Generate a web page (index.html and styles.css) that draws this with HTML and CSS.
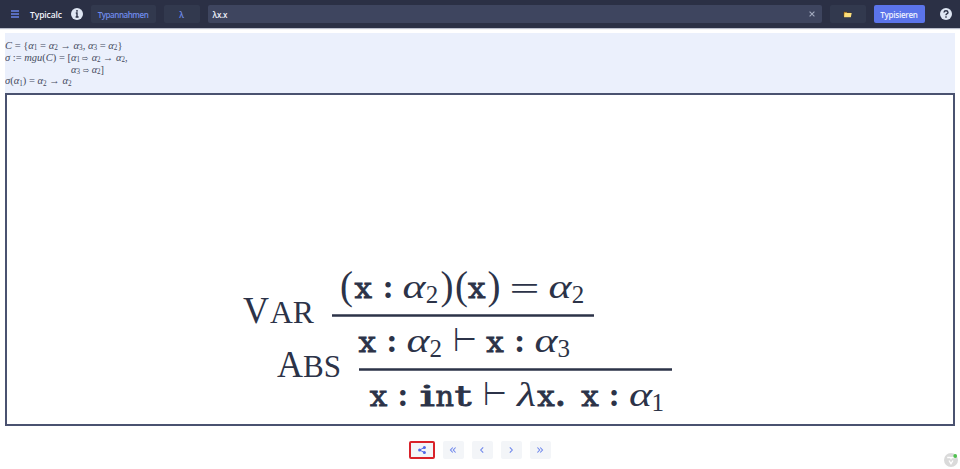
FILE: index.html
```html
<!DOCTYPE html>
<html lang="de">
<head>
<meta charset="utf-8">
<title>Typicalc</title>
<link rel="stylesheet" href="styles.css">
</head>
<body>
<header class="bar">
  <svg class="menu" viewBox="0 0 8 8"><path d="M0 1h8M0 4h8M0 7h8"/></svg>
  <h1>Typicalc</h1>
  <svg class="round info" viewBox="0 0 12 12"><circle cx="6" cy="6" r="6"/><path d="M6 2v1.7M4.8 5H6v4M4.6 9h3"/></svg>
  <button class="btn types">Typannahmen</button>
  <button class="btn lambda">λ</button>
  <div class="field"><span>λx.x</span><svg viewBox="0 0 6 6"><path d="M.6.6l4.8 4.8M5.4.6L.6 5.4"/></svg></div>
  <button class="btn folder"><svg viewBox="0 0 9 7"><path class="back" d="M.5 6V.8h3l.7.7h3.6V6z"/><path class="front" d="M1 6.2L1.8 2h6.9L7.9 6.2z"/></svg></button>
  <button class="btn primary">Typisieren</button>
  <svg class="round help" viewBox="0 0 12 12"><circle cx="6" cy="6" r="6"/><path d="M4 4.5Q4.1 2.8 6 2.8T8 4.5Q8 5.4 6.8 5.9Q6 6.3 6 7.2M6 8.3v1.4"/></svg>
</header>
<main>
  <section class="constraints">
    <svg class="math" viewBox="5 33 950 60">
      <text x="5" y="48.6" textLength="117.5" lengthAdjust="spacingAndGlyphs"><tspan class="it">C</tspan> = {<tspan class="it">α</tspan><tspan class="sub" dy="1.5">1</tspan><tspan dy="-1.5"> = </tspan><tspan class="it">α</tspan><tspan class="sub" dy="1.5">2</tspan><tspan dy="-1.5"> → </tspan><tspan class="it">α</tspan><tspan class="sub" dy="1.5">3</tspan><tspan dy="-1.5">, </tspan><tspan class="it">α</tspan><tspan class="sub" dy="1.5">3</tspan><tspan dy="-1.5"> = </tspan><tspan class="it">α</tspan><tspan class="sub" dy="1.5">2</tspan><tspan dy="-1.5">}</tspan></text>
      <text x="5" y="60.6" textLength="66" lengthAdjust="spacingAndGlyphs"><tspan class="it">σ</tspan> := <tspan class="it">mgu</tspan>(<tspan class="it">C</tspan>) = [</text>
      <text x="71" y="60.6" textLength="56.5" lengthAdjust="spacingAndGlyphs"><tspan class="it">α</tspan><tspan class="sub" dy="1.5">1</tspan><tspan dy="-1.5"> </tspan><tspan class="small">⇨</tspan> <tspan class="it">α</tspan><tspan class="sub" dy="1.5">2</tspan><tspan dy="-1.5"> → </tspan><tspan class="it">α</tspan><tspan class="sub" dy="1.5">2</tspan><tspan dy="-1.5">,</tspan></text>
      <text x="71" y="72.6" textLength="33" lengthAdjust="spacingAndGlyphs"><tspan class="it">α</tspan><tspan class="sub" dy="1.5">3</tspan><tspan dy="-1.5"> </tspan><tspan class="small">⇨</tspan> <tspan class="it">α</tspan><tspan class="sub" dy="1.5">2</tspan><tspan dy="-1.5">]</tspan></text>
      <text x="5" y="84.4" textLength="66.5" lengthAdjust="spacingAndGlyphs"><tspan class="it">σ</tspan>(<tspan class="it">α</tspan><tspan class="sub" dy="1.5">1</tspan><tspan dy="-1.5">) = </tspan><tspan class="it">α</tspan><tspan class="sub" dy="1.5">2</tspan><tspan dy="-1.5"> → </tspan><tspan class="it">α</tspan><tspan class="sub" dy="1.5">2</tspan></text>
    </svg>
  </section>
  <section class="proof">
    <svg class="tree" viewBox="7 95 946 329">
      <g class="rule-name">
        <text x="243" y="322.5" textLength="26" lengthAdjust="spacingAndGlyphs">V</text><text class="sc" x="270" y="322.5" textLength="44" lengthAdjust="spacingAndGlyphs">AR</text>
        <text x="277" y="376.5" textLength="26" lengthAdjust="spacingAndGlyphs">A</text><text class="sc" x="303" y="376.5" textLength="38" lengthAdjust="spacingAndGlyphs">BS</text>
      </g>
      <path d="M332 315.6H594M359 369.4H672"/>
      <g class="paren"><text x="340" y="298.5">(</text><text x="440.5" y="298.5">)</text><text x="455" y="298.5">(</text><text x="487.5" y="298.5">)</text></g>
      <g class="tt">
        <text x="354.5" y="298" textLength="17.5" lengthAdjust="spacingAndGlyphs">x</text><text x="468" y="298" textLength="17.5" lengthAdjust="spacingAndGlyphs">x</text>
        <text x="358.5" y="351.5" textLength="17.5" lengthAdjust="spacingAndGlyphs">x</text><text x="486.2" y="351.5" textLength="17.5" lengthAdjust="spacingAndGlyphs">x</text>
        <text x="369.7" y="405.5" textLength="17.5" lengthAdjust="spacingAndGlyphs">x</text>
        <text x="419.5" y="405.5" textLength="15.5" lengthAdjust="spacingAndGlyphs">i</text><text x="435.5" y="405.5" textLength="18.5" lengthAdjust="spacingAndGlyphs">n</text><text x="454.5" y="405.5" textLength="17" lengthAdjust="spacingAndGlyphs">t</text>
        <text x="537.2" y="405.5" textLength="17.5" lengthAdjust="spacingAndGlyphs">x</text><text class="dot-op" x="555.5" y="405.5">.</text><text x="581.2" y="405.5" textLength="17.5" lengthAdjust="spacingAndGlyphs">x</text>
      </g>
      <g class="colon"><text x="382.5" y="298">:</text><text x="386.2" y="351.5">:</text><text x="514" y="351.5">:</text><text x="397.3" y="405.5">:</text><text x="608.5" y="405.5">:</text></g>
      <g class="var">
        <text x="402.5" y="298" textLength="23" lengthAdjust="spacingAndGlyphs">α</text><text x="548.5" y="298" textLength="23" lengthAdjust="spacingAndGlyphs">α</text>
        <text x="406.5" y="351.5" textLength="23" lengthAdjust="spacingAndGlyphs">α</text><text x="534.5" y="351.5" textLength="23" lengthAdjust="spacingAndGlyphs">α</text>
        <text x="629" y="405.5" textLength="23" lengthAdjust="spacingAndGlyphs">α</text><text x="517" y="405.5" textLength="19" lengthAdjust="spacingAndGlyphs">λ</text>
      </g>
      <g class="index"><text x="425.7" y="303.4">2</text><text x="571.7" y="303.4">2</text><text x="429.5" y="357.2">2</text><text x="557.5" y="357.2">3</text><text x="651.5" y="411">1</text></g>
      <g class="op"><text x="509.5" y="299.5" textLength="30" lengthAdjust="spacingAndGlyphs">=</text></g>
      <g class="op turn"><text x="453" y="351" textLength="24" lengthAdjust="spacingAndGlyphs">⊢</text><text x="483" y="405" textLength="24" lengthAdjust="spacingAndGlyphs">⊢</text></g>
    </svg>
  </section>
  <nav class="steps">
    <button class="share"><svg viewBox="0 0 8 8"><path d="M6.5 1.5L1.5 4l5 2.5"/><circle cx="6.4" cy="1.5" r="1.5"/><circle cx="1.6" cy="4" r="1.5"/><circle cx="6.4" cy="6.5" r="1.5"/></svg></button>
    <button><svg viewBox="0 0 8 8"><path d="M3.8 1.5L1.5 4l2.3 2.5M6.6 1.5L4.3 4l2.3 2.5"/></svg></button>
    <button><svg viewBox="0 0 8 8"><path d="M5.2 1.3L2.7 4l2.5 2.7"/></svg></button>
    <button><svg viewBox="0 0 8 8"><path d="M2.8 1.3L5.3 4 2.8 6.7"/></svg></button>
    <button><svg viewBox="0 0 8 8"><path d="M1.4 1.5L3.7 4 1.4 6.5M4.2 1.5L6.5 4 4.2 6.5"/></svg></button>
  </nav>
</main>
<svg class="dev" viewBox="0 0 14 14"><circle cx="7" cy="7" r="7"/><path d="M3.2 4.5h2.5q1 0 1.3.8.3-.8 1.3-.8h2.5M5 7.5l2 3.3 2-3.3"/><circle class="dot" cx="11.2" cy="3" r="1.9"/></svg>
</body>
</html>
```
FILE: styles.css
```css
* { box-sizing: border-box; }
body { margin: 0; width: 960px; height: 469px; overflow: hidden; background: #fff; font-family: "Open Sans", sans-serif; font-size: 8px; color: #2c3348; }
svg { display: block; flex: none; }
button { margin: 0; padding: 0; border: 0; font: inherit; display: flex; align-items: center; justify-content: center; flex: none; }
.bar { height: 28px; display: flex; align-items: center; padding-left: 11px; background: #2b3045; box-shadow: 0 1px 1px #b9bdcb; }
.menu { width: 8px; height: 8px; stroke: #6a82e8; stroke-width: 1.4; }
h1 { margin: 0 0 0 11px; width: 33px; font-size: 8.5px; font-weight: 600; letter-spacing: -.1px; color: #f2f5fc; white-space: nowrap; }
.round { width: 12px; height: 12px; fill: #dfe6f3; }
.round path { fill: none; stroke: #2b3045; stroke-width: 1.4; }
.info { margin-left: 7.5px; }
.btn { height: 18px; border-radius: 2px; background: #32394e; color: #6f8bea; font-weight: 600; }
.types { width: 65px; margin-left: 8px; font-size: 8px; letter-spacing: -.45px; }
.lambda { width: 36px; margin-left: 8px; }
.field { width: 614px; height: 18px; margin-left: 8px; padding: 0 6.5px 0 5px; display: flex; flex: none; align-items: center; justify-content: space-between; border-radius: 2px; background: #3e455f; color: #eef2fa; font-weight: 600; }
.field span { font-size: 8px; letter-spacing: -.2px; }
.field svg { width: 6px; height: 6px; stroke: #a4acc0; stroke-width: 1.1; }
.folder { width: 36px; margin-left: 8px; }
.folder svg { width: 9px; height: 7px; }
.back { fill: #d69a2d; stroke: #20242f; stroke-width: .6; }
.front { fill: #fbdf7c; }
.primary { width: 51px; margin-left: 8px; background: #5b74ea; color: #eef2ff; font-weight: 600; font-size: 8px; letter-spacing: -.25px; }
.help { margin-left: 15.5px; }
main { padding: 5px 5px 0; }
.constraints { height: 60px; background: #ebf0fc; }
.math { width: 950px; height: 60px; font: 11px "Liberation Serif", serif; fill: #454b60; }
.it { font-style: italic; }
.sub { font-size: 7.5px; }
.small { font-size: 8px; }
.proof { height: 333px; border: 2px solid #4a5270; }
.tree { width: 946px; height: 329px; font-family: "Liberation Serif", serif; fill: #2c3348; }
.tree path { stroke: #2c3348; stroke-width: 2.5; }
.rule-name { font-size: 37px; }
.sc { font-size: 31px; }
.paren { font-size: 39px; }
.tt { font-family: "DejaVu Serif", serif; font-size: 28px; stroke: #2c3348; stroke-width: .8; }
.dot-op { font-weight: 700; }
.colon { font-size: 34px; font-weight: 700; }
.var { font-size: 34px; font-style: italic; }
.index { font-size: 25px; }
.op { font-size: 34px; }
.turn { font-family: "DejaVu Sans", sans-serif; font-weight: 200; font-size: 33px; }
.steps { display: flex; justify-content: center; gap: 8px; padding-top: 15px; }
.steps button { width: 21px; height: 18px; border-radius: 2px; background: #f3f5f8; }
.steps .share { width: 26px; border: 2px solid #d9222a; margin-right: -.5px; }
.steps svg { width: 8px; height: 8px; fill: none; stroke: #6f87ec; stroke-width: 1.1; }
.steps .share svg { fill: #4f68e6; stroke: #4f68e6; stroke-width: .9; }
.steps .share path { fill: none; }
.steps .share circle { stroke: none; }
.dev { position: absolute; left: 944px; top: 453px; width: 14px; height: 14px; fill: #dadada; }
.dev path { fill: none; stroke: #fff; stroke-width: 1.3; }
.dev .dot { fill: #4fc14f; }
```
